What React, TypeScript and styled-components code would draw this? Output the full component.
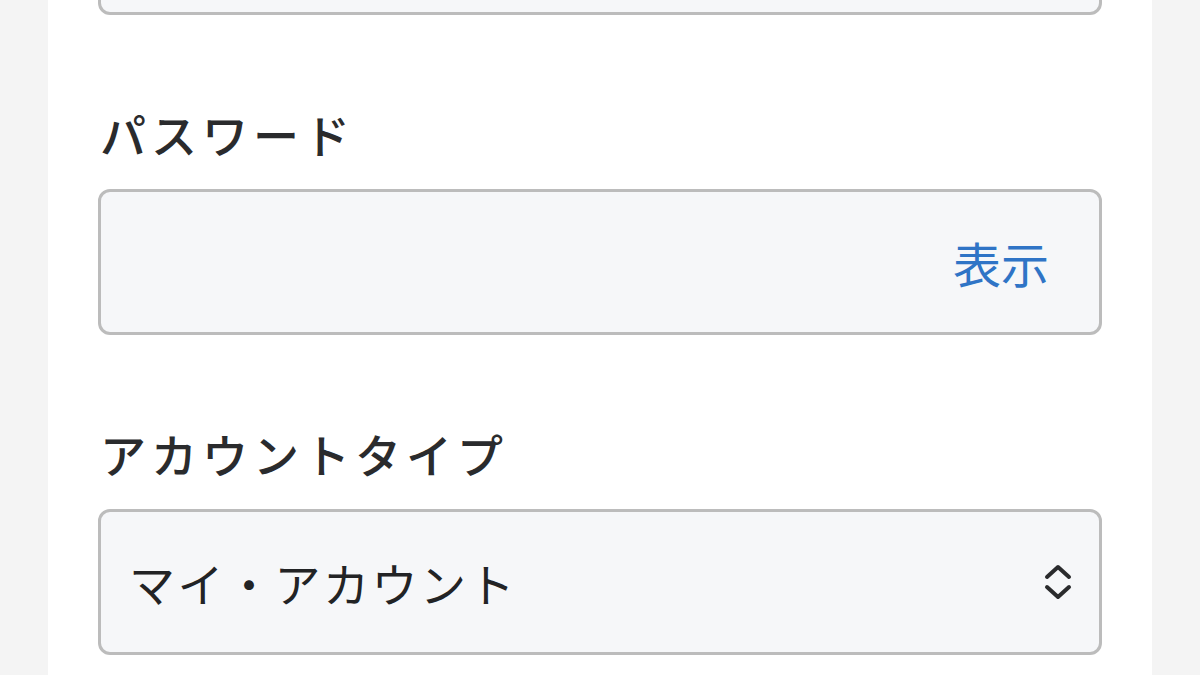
import styled, { createGlobalStyle } from "styled-components";

const GlobalStyle = createGlobalStyle`
  html, body {
    margin: 0;
    padding: 0;
    background: #f4f4f4;
    overflow: hidden;
  }
  body {
    font-family: "Noto Sans CJK JP", "Noto Sans", sans-serif;
    color: #222325;
  }
`;

const Page = styled.div`
  height: 675px;
  overflow: hidden;
  display: flex;
  justify-content: center;
`;

const Panel = styled.div`
  width: 1104px;
  background: #ffffff;
  padding: 0 50px;
  box-sizing: border-box;
  display: flex;
  flex-direction: column;
  gap: 88px;
  margin-top: -131px;
`;

const Field = styled.div`
  display: flex;
  flex-direction: column;
`;

const Label = styled.label`
  font-size: 46px;
  font-weight: 500;
  line-height: 60px;
  letter-spacing: 5px;
  margin-bottom: 26px;
  padding-left: 2px;
  color: #2a2b2d;
`;

const Box = styled.div`
  height: 146px;
  box-sizing: border-box;
  border: 3px solid #bcbcbc;
  border-radius: 12px;
  background: #f6f7f9;
  display: flex;
  align-items: center;
  justify-content: space-between;
  padding: 0 24px 0 28px;
`;

const Value = styled.span`
  font-size: 46px;
  letter-spacing: 2.5px;
  line-height: 1;
`;

const ShowButton = styled.button`
  border: none;
  background: none;
  padding: 0;
  margin-right: 26px;
  font-family: inherit;
  font-size: 48px;
  line-height: 1;
  color: #2f74c6;
  cursor: pointer;
`;

const Chevrons = () => (
  <svg width="34" height="40" viewBox="0 0 34 40" fill="none">
    <path
      d="M6 15 L17 5 L28 15 M6 25 L17 35 L28 25"
      stroke="#2a2b2d"
      strokeWidth="4"
      strokeLinecap="round"
      strokeLinejoin="round"
    />
  </svg>
);

export default function App() {
  return (
    <>
      <GlobalStyle />
      <Page>
        <Panel>
          <Box />
          <Field>
            <Label>パスワード</Label>
            <Box>
              <span />
              <ShowButton>表示</ShowButton>
            </Box>
          </Field>
          <Field>
            <Label>アカウントタイプ</Label>
            <Box>
              <Value>マイ・アカウント</Value>
              <Chevrons />
            </Box>
          </Field>
        </Panel>
      </Page>
    </>
  );
}
